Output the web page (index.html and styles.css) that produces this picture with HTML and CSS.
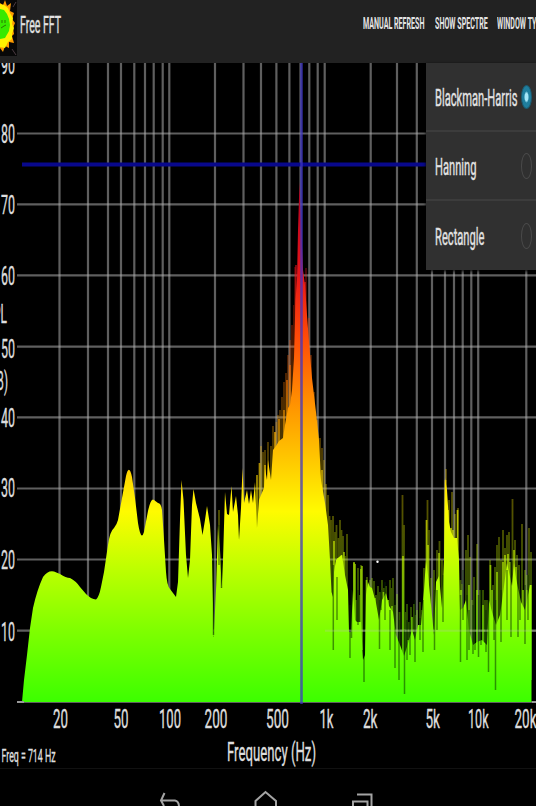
FILE: index.html
```
<!DOCTYPE html>
<html lang="en">
<head>
<meta charset="utf-8">
<title>Free FFT</title>
<link rel="stylesheet" href="styles.css">
</head>
<body>
<div class="app">
  <header class="bar">
    <svg class="logo" width="17" height="56" viewBox="0 0 17 56">
      <rect width="17" height="56" fill="#080808"/>
      <path d="M0 3 3 5 5 0 7 6 11 3 10 11 14 13 12 19 15 23 13 28 14 34 12 36 14 43 9 42 9 48 5 46 3 52 0 48Z" fill="#ff9c00"/>
      <path d="M0 4 4 5 8 8 10 13 13 18 12 24 14 28 12 34 12 39 8 42 5 48 0 47Z" fill="#fff200"/>
      <path d="M0 9 4 10 7 14 9 19 10 25 9 31 5 38 0 39Z" fill="#37e900"/>
      <path d="M2 20v3M5 20v3M1 28l3-2 2-1" stroke="#287b00" fill="none"/>
      <path d="M12 49l4 6M13 7l3-5" stroke="#4b3b42"/>
    </svg>
    <h1 class="title"><span>Free FFT</span></h1>
    <nav class="actions">
      <button class="action refresh"><span>MANUAL REFRESH</span></button>
      <button class="action spectre"><span>SHOW SPECTRE</span></button>
      <button class="action window"><span>WINDOW TYPE</span></button>
    </nav>
  </header>

  <main class="plot">
    <svg class="chart" width="536" height="706" viewBox="0 63 536 706">
      <defs>
        <linearGradient id="heat" gradientUnits="userSpaceOnUse" x1="0" y1="180" x2="0" y2="702">
          <stop offset="0" stop-color="#a80024"/>
          <stop offset=".18" stop-color="#e8141a"/>
          <stop offset=".3" stop-color="#ff4a08"/>
          <stop offset=".44" stop-color="#ff9800"/>
          <stop offset=".55" stop-color="#ffcf00"/>
          <stop offset=".635" stop-color="#fffb00"/>
          <stop offset=".74" stop-color="#c0ff00"/>
          <stop offset=".86" stop-color="#80ff00"/>
          <stop offset="1" stop-color="#3cff00"/>
        </linearGradient>
      </defs>
      <g class="grid">
        <path d="M59.5 63V702M88 63V702M108 63V702M121 63V702M134.3 63V702M145 63V702M153.7 63V702M162.7 63V702M169.3 63V702M215 63V702M243.5 63V702M261 63V702M276.4 63V702M289.4 63V702M300.5 63V702M309.3 63V702M317.7 63V702M324.7 63V702M370.7 63V702M397 63V702M416.8 63V702M432 63V702M445 63V702M454 63V702M462.7 63V702M471.3 63V702M478.2 63V702M526.3 63V702"/>
        <path d="M17 133.5H536M17 204.3H536M17 275.4H536M17 346.7H536M17 417.3H536M17 488.5H536M17 559.5H536M17 630.7H536M17 702H536"/>
      </g>
      <path class="level" d="M22 164.5H428"/>
      <path fill="url(#heat)" d="M22 702 24 680 27 655 30 628 33 608Q37 590 43 577Q48 570 54 571.5L60 574Q66 578 70 578Q76 581 80 587L86 594Q91 599 96 599.5Q99 597 101 587L104 572 108 545Q110 531 114 528Q117 524 118 520L122 498 126 476Q129 463 132 477L135 498 138 523Q141 542 144 532L148 511Q151 497 154 500L158 503Q161 503 162 510L164 540 166 572Q167 586 170 589L176 597 178 582 180 520 181.5 480 183.5 500 186 555 188 578 190 560 192 505 193.5 489 196 503 200 519 202.5 535 205 520 207 506 210 525 212 555 213.7 637 216 590 218 525 220 550 221.7 588 223 560 225 492 227 514 229 515 231.5 486 233 512 236 496 238 515 239 540 241 508 242.5 468 244 503 247 490 249 504 251 490 253 503 255 482 257 528 259 500 261 495 264 488 265 468 267 480 268 460 271 480 273 450 276 446 279 441 283 438 285 425 288 408 290 405 292 390 294 358 295.5 300 297 280 298 230 299.5 182 301 220 303 270 305 285 307 315 309 342 312 378 316 412 319 440 321 480 325 503 328 525 330 560 331.5 592 333 597 334 572 336 560 339 557 342 555 345 575 348 590 349 632 351 632 353 590 355 620 357 622 361 622 363 660 365 655 366 595 368 582 370 587 372 588 376 603 379 620 382 600 386 593 389 606 393 612 396 635 400 645 404 656 406 650 409 640 412 630 415 640 418 625 421 625 424 590 426 560 428 575 431 605 434 635 436 582 439 576 442 608 444 560 445 478 447 490 449 522 451 532 454 538 457 538 459 560 460 610 463 608 466 600 469 630 473 645 477 642 482 640 487 645 489 600 492 612 496 625 500 615 503 594 507 563 509 572 512 586 514 563 516 578 518 588 521 602 525 610 528 595 530 585 531.5 585V702Z"/>
      <g stroke="url(#heat)" fill="none">
        <path class="mist" d="M219 702V510M261 560V446M263 560V452M265 560V450M268 560V442M271 560V446M273 520V426M275 500V432M276.500 500V422M278 500V415M280 480V410M282 480V397M284 450V382M286 440V373M288 430V355M290 430V340M292 430V325M294 420V305M295 400V267M306 380V268M309 400V318M311 430V355M314 450V392M317 480V420M320 550V438M322 560V448M324 570V460M326 590V484M328 590V495M329.500 590V516M331 650V520M333 650V516M335 650V532M336.500 650V525M338.500 650V538M340 650V520M341.500 650V530M343 650V536M345.500 650V556M347 650V534M354 650V563M356 650V600M358 650V568M359.500 650V595M361 650V565M367 650V577M370 650V580M372 650V578M374 650V581M376 650V595M378 650V586M380 650V592M382 650V580M384 650V588M386 670V586M388 670V600M390 670V580M391.500 670V588M393 670V578M395 680V605M397 690V594M399.500 690V612M402.500 700V495M404 690V525M405.500 690V612M407 690V604M409 680V622M411 670V607M414 690V604M415.500 690V615M417 670V610M420 670V602M422 670V610M424 670V568M427.500 650V500M429 660V530M431 660V578M434 660V570M437 660V550M439.500 650V541M442 650V560M446 650V469M449 640V500M452 640V492M455 640V514M458 640V508M460.500 660V580M462 670V584M466 670V550M468 670V535M470 670V557M472 670V600M474 670V577M477 670V544M480 680V590M483 680V590M485 680V600M487 680V600M490 680V560M493 680V585M495 680V567M497 680V545M499 680V537M501 680V560M503 680V530M505 680V548M507 680V535M509 680V532M512.500 670V499M515 670V540M517 670V555M519 670V565M522 670V524M525 670V570M527 670V575M529 670V528M531 680V552"/>
        <path class="bright" d="M257 530V475M259.500 530V463M265 520V465M275 480V432M279 480V419M284 460V410M287 450V380M290 430V365M296 400V265M305 380V282M322 550V470M334 660V541M338 650V558M341.500 650V555M344 650V552M354 660V562M355 650V564M361 660V569M362 650V566M366.500 650V580M369 650V590M375 650V598M383.500 650V592M388 670V600M392 670V606M403 670V556M408 670V640M412 670V617M426.500 650V520M428 650V545M439 650V553M444 640V575M445.500 640V480M448 640V510M451 640V528M453 640V530M457.500 640V510M461 670V590M465 670V615M469 670V585M477 670V590M483 670V605M490.500 680V565M492 670V590M497 670V572M499 670V620M503 680V562M505 680V555M508 680V554M510 680V562M514 670V550M516 670V567M523 670V590M527 670V590M530.500 680V585"/>
      </g>
      <path class="dips" d="M213.500 530V635M219 525V565M221.500 560V588M333.300 565V650M337 577V620M350 605V658M351.500 590V638M358 590V625M364 590V682M379.500 600V649M381 590V610M385 582V620M390 610V650M395 600V668M399 620V680M404.500 630V694M407 620V660M410 620V655M415 600V662M420 618V640M423 600V652M434.500 590V650M437 590V630M443 575V622M460.500 595V662M463 570V620M467 595V660M469 610V650M473 605V654M475 590V650M478.500 595V657M481 590V645M486 610V652M488.500 600V672M495.500 600V690M494 590V640M501 590V642M507 570V620M511 560V637M518 570V637M520 590V620M525 585V644M528 575V620"/>
      <path class="topline" d="M17 702H24M532 702H536"/>
      <path class="cursor" d="M301.500 63V704"/>
      <path class="faintgrid" d="M325 630.700H536"/>
      <circle cx="377.500" cy="561.700" r="1.200" fill="#fff"/>
      <g class="ticks">
        <text x="1" y="74" textLength="14" lengthAdjust="spacingAndGlyphs">90</text>
        <text x="1" y="142.500" textLength="14" lengthAdjust="spacingAndGlyphs">80</text>
        <text x="1" y="213.500" textLength="14" lengthAdjust="spacingAndGlyphs">70</text>
        <text x="1" y="285" textLength="14" lengthAdjust="spacingAndGlyphs">60</text>
        <text x="1" y="357.500" textLength="14" lengthAdjust="spacingAndGlyphs">50</text>
        <text x="1" y="427" textLength="14" lengthAdjust="spacingAndGlyphs">40</text>
        <text x="1" y="497" textLength="14" lengthAdjust="spacingAndGlyphs">30</text>
        <text x="1" y="569" textLength="14" lengthAdjust="spacingAndGlyphs">20</text>
        <text x="1" y="640.500" textLength="14" lengthAdjust="spacingAndGlyphs">10</text>
        <text x="-14" y="323" textLength="21" lengthAdjust="spacingAndGlyphs">SPL</text>
        <text x="-14" y="390" textLength="22" lengthAdjust="spacingAndGlyphs">(dB)</text>
        <text x="53" y="728" textLength="15" lengthAdjust="spacingAndGlyphs">20</text>
        <text x="113.500" y="728" textLength="15" lengthAdjust="spacingAndGlyphs">50</text>
        <text x="159" y="728" textLength="22" lengthAdjust="spacingAndGlyphs">100</text>
        <text x="204.500" y="728" textLength="23" lengthAdjust="spacingAndGlyphs">200</text>
        <text x="266" y="728" textLength="23" lengthAdjust="spacingAndGlyphs">500</text>
        <text x="319.500" y="728" textLength="14" lengthAdjust="spacingAndGlyphs">1k</text>
        <text x="363" y="728" textLength="14.500" lengthAdjust="spacingAndGlyphs">2k</text>
        <text x="425.500" y="728" textLength="14.500" lengthAdjust="spacingAndGlyphs">5k</text>
        <text x="468" y="728" textLength="20.500" lengthAdjust="spacingAndGlyphs">10k</text>
        <text x="514.500" y="728" textLength="22" lengthAdjust="spacingAndGlyphs">20k</text>
        <text x="227" y="760.500" textLength="89" lengthAdjust="spacingAndGlyphs">Frequency (Hz)</text>
        <text class="readout" x="1.500" y="761.800" textLength="54" lengthAdjust="spacingAndGlyphs">Freq = 714 Hz</text>
      </g>
      <path d="M0 768.500H536" stroke="#111"/>
    </svg>

    <div class="menu">
      <div class="item"><span class="label">Blackman-Harris</span><i class="radio on"></i></div>
      <div class="item"><span class="label">Hanning</span><i class="radio"></i></div>
      <div class="item"><span class="label">Rectangle</span><i class="radio"></i></div>
    </div>
  </main>

  <footer class="system">
    <svg width="536" height="37" viewBox="0 769 536 37" fill="none" stroke="#a4a4a4" stroke-width="2">
      <path d="M164.500 793 161 800.500 164 806M161 800.500H175Q178.500 801 179 806"/>
      <path d="M255.500 806V801L265.500 792 276 801V806"/>
      <path d="M357 794.500H371.500V806M353 806V801.500H367.500V806"/>
    </svg>
  </footer>
</div>
</body>
</html>
```
FILE: styles.css
```
* { box-sizing: border-box; }

body {
  margin: 0;
  background: #000;
  color: #e2e2e2;
  font-family: Roboto, "Liberation Sans", sans-serif;
}

.app {
  display: flex;
  flex-direction: column;
  width: 536px;
  height: 806px;
  overflow: hidden;
}

.bar {
  display: flex;
  flex: 0 0 63px;
  background: #222;
}

.logo { display: block; flex: none; }

/* Labels keep tall glyphs and are narrowed horizontally. */
.title span,
.action span,
.label {
  display: block;
  width: max-content;
  white-space: nowrap;
  transform-origin: 0 50%;
}

.title {
  flex: 0 0 346px;
  height: 50px;
  margin: 0;
  padding-left: 3px;
  font-size: 24px;
  line-height: 50px;
  font-weight: 400;
}

.title span { transform: scaleX(.44); -webkit-text-stroke: .4px; }

.actions { display: flex; height: 46px; }

.action {
  flex: none;
  padding: 0;
  border: 0;
  background: none;
  color: #e2e2e2;
  font: 700 17px/46px Roboto, sans-serif;
  text-align: left;
}

.refresh { width: 71.5px; }
.spectre { width: 62.5px; }
.window { width: 50px; }
.action span { transform: scaleX(.418); }

.plot { position: relative; flex: 0 0 706px; }

.chart { display: block; }

.grid { stroke: #b0b0b0; stroke-opacity: .54; stroke-width: 2.2; fill: none; }
.level { stroke: #08088c; stroke-width: 4.2; }
.cursor { stroke: #3d34c4; stroke-opacity: .75; stroke-width: 2.6; }
.faintgrid { stroke: #b8c8a0; stroke-opacity: .3; stroke-width: 2; }
.topline { stroke: #999; stroke-width: 2.2; }
.mist { stroke-width: 1.8; stroke-opacity: .33; }
.bright { stroke-width: 1.7; stroke-opacity: .65; }
.dips { stroke: #042800; stroke-opacity: .5; stroke-width: 1.5; fill: none; }

.ticks text {
  fill: #ddd;
  stroke: #ddd;
  stroke-width: .4px;
  font-size: 26px;
}

.ticks .readout { font-size: 19px; }

.menu {
  position: absolute;
  top: 0;
  right: 0;
  width: 110px;
  height: 207px;
  background: #303030;
  box-shadow: 0 1px 3px #000;
}

.item {
  display: flex;
  align-items: center;
  height: 69px;
  padding-left: 9px;
  border-bottom: 2px solid #3c3c3c;
}

.item:last-child { border-bottom: 0; }

.label {
  flex: none;
  width: 86px;
  padding-top: 2px;
  font-size: 24px;
  line-height: 30px;
  transform: scaleX(.465);
  -webkit-text-stroke: .4px;
}

.radio {
  flex: none;
  width: 11px;
  height: 26px;
  border: 1.5px solid #4a4a4a;
  border-radius: 50%;
}

.radio.on {
  height: 24px;
  border: 1.5px solid #1c5c72;
  background: radial-gradient(ellipse 2.5px 6px, #a5e6f8 60%, #1f7e9e 100%);
}

.system { flex: 0 0 37px; }
.system svg { display: block; }
```
